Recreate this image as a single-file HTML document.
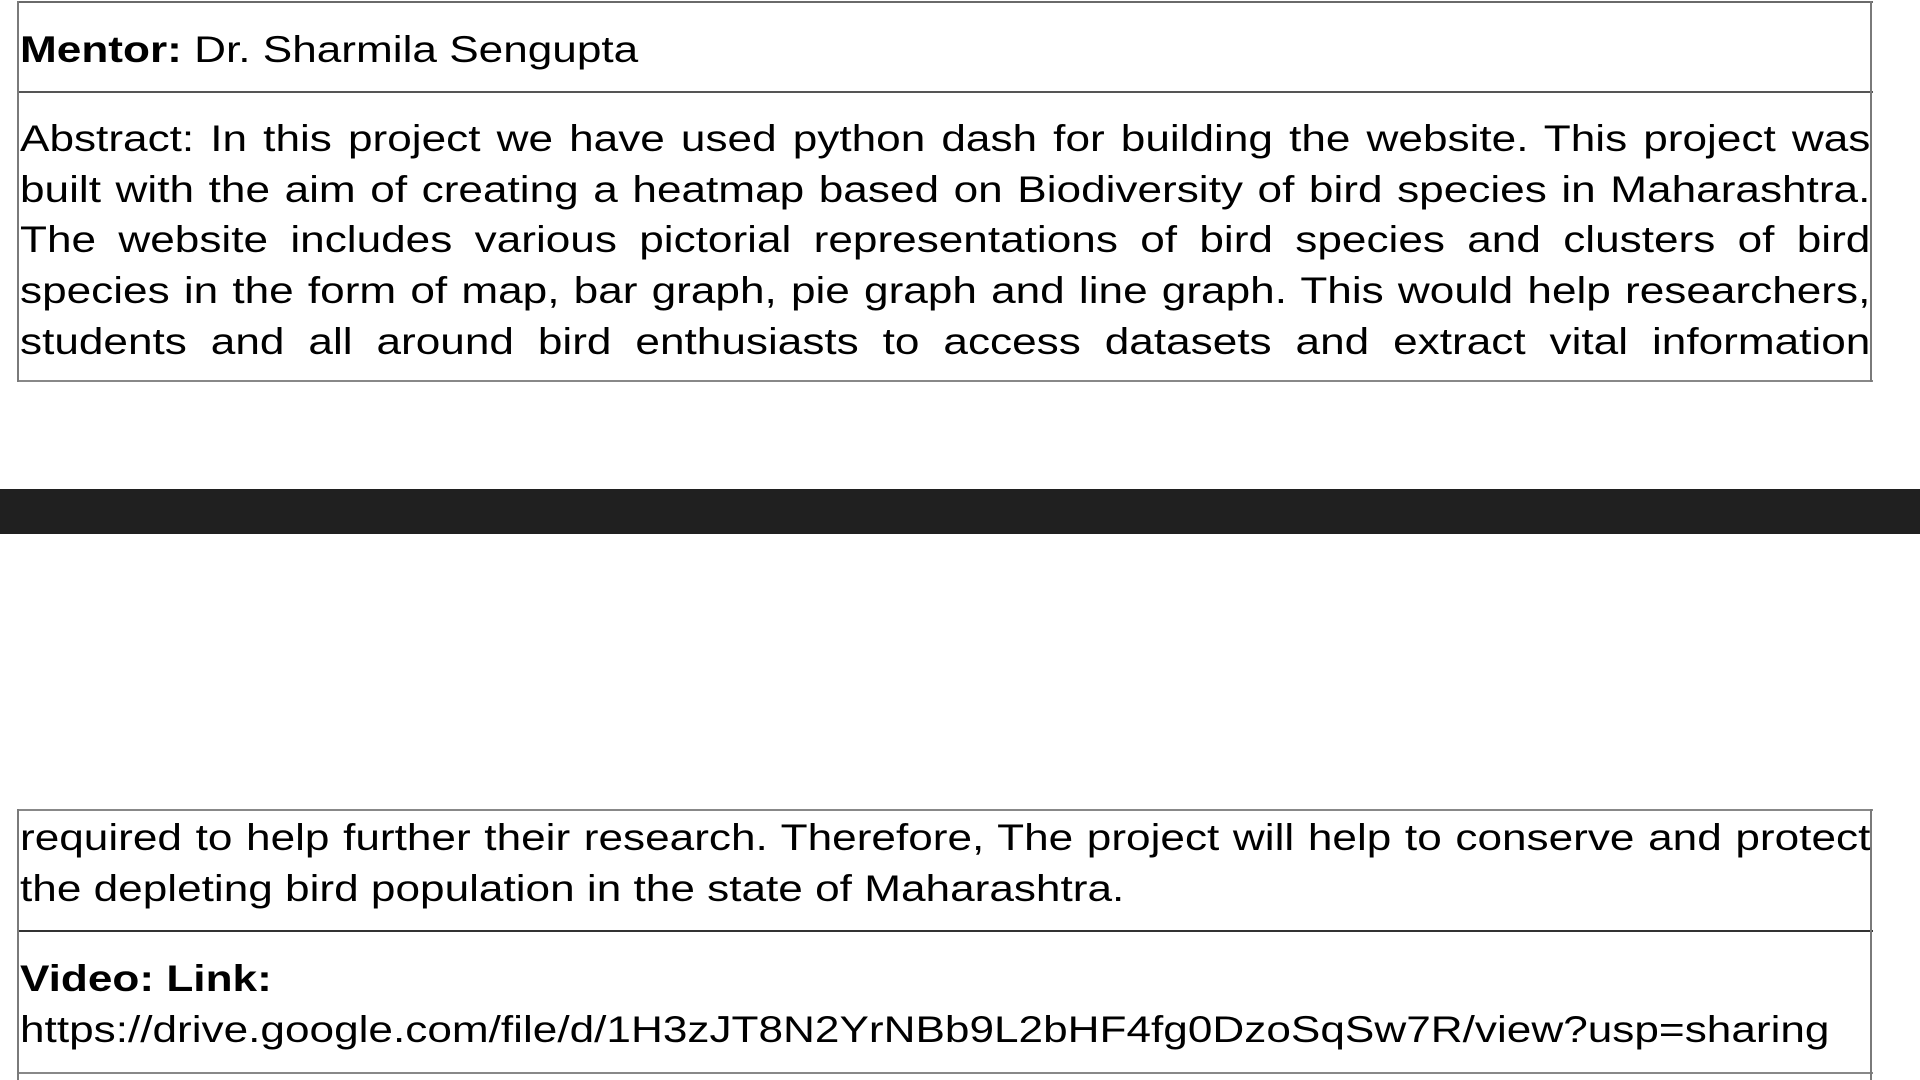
<!DOCTYPE html>
<html><head><meta charset="utf-8"><style>
html,body{margin:0;padding:0;background:#fff;width:1920px;height:1080px;overflow:hidden;position:relative;font-family:"Liberation Sans",Arial,sans-serif;color:#000}
.l{position:absolute;left:20px;width:1551px;font-size:37px;line-height:51px;height:51px;white-space:nowrap;overflow:visible;transform:scaleX(1.193);transform-origin:0 0}
.j{text-align:justify;text-align-last:justify;white-space:normal}
.h{position:absolute;left:17px;width:1856px;background:#6a6a6a}
.v{position:absolute;width:2px;background:#7a7a7a}
</style></head><body>
<div class="h" style="top:1px;height:2px"></div>
<div class="h" style="top:91px;height:2px;background:#555"></div>
<div class="h" style="top:380px;height:2px;background:#888"></div>
<div class="v" style="left:17px;top:1px;height:381px"></div>
<div class="v" style="left:1870px;top:1px;height:381px"></div>

<div class="l" style="top:24px"><b>Mentor:</b> Dr. Sharmila Sengupta</div>
<div class="l j" style="top:113px">Abstract: In this project we have used python dash for building the website. This project was</div>
<div class="l j" style="top:164px">built with the aim of creating a heatmap based on Biodiversity of bird species in Maharashtra.</div>
<div class="l j" style="top:214px">The website includes various pictorial representations of bird species and clusters of bird</div>
<div class="l j" style="top:265px">species in the form of map, bar graph, pie graph and line graph. This would help researchers,</div>
<div class="l j" style="top:316px">students and all around bird enthusiasts to access datasets and extract vital information</div>

<div style="position:absolute;left:0;top:489px;width:1920px;height:45px;background:#202020"></div>

<div class="h" style="top:809px;height:2px;background:#888"></div>
<div class="h" style="top:930px;height:2px;background:#333"></div>
<div class="h" style="top:1072px;height:2px;background:#888"></div>
<div class="v" style="left:17px;top:809px;height:271px"></div>
<div class="v" style="left:1870px;top:809px;height:271px"></div>

<div class="l j" style="top:812px">required to help further their research. Therefore, The project will help to conserve and protect</div>
<div class="l" style="top:863px">the depleting bird population in the state of Maharashtra.</div>
<div class="l" style="top:953px"><b>Video: Link:</b></div>
<div class="l" style="top:1004px">https://drive.google.com/file/d/1H3zJT8N2YrNBb9L2bHF4fg0DzoSqSw7R/view?usp=sharing</div>
</body></html>
